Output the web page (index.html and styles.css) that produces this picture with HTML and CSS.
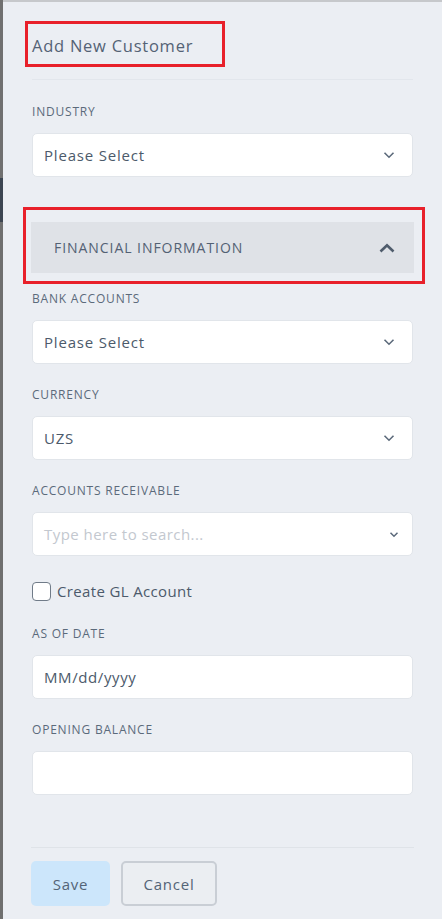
FILE: index.html
```html
<!DOCTYPE html>
<html lang="en">
  <head>
    <meta charset="UTF-8" />
    <meta name="viewport" content="width=device-width, initial-scale=1.0" />
    <title>Add New Customer</title>
    <link rel="stylesheet" href="styles.css">
  </head>
  <body>
    <div class="backdrop"></div>

    <aside class="drawer">
      <header class="drawer-head">
        <h2 class="title">Add New Customer<span class="mark mark-title"></span></h2>
      </header>

      <div class="field">
        <label class="label">Industry</label>
        <div class="select">
          <span>Please Select</span>
          <svg class="chev" width="12" height="8" viewBox="0 0 12 8"><path d="M1.5 1.8 6 6.2l4.5-4.4" fill="none" stroke="#5b697a" stroke-width="1.6"/></svg>
        </div>
      </div>

      <div class="section">
        <span class="section-title">Financial Information</span>
        <svg class="chev-up" width="16" height="10" viewBox="0 0 16 10"><path d="M1.5 8.5 8 2.2l6.5 6.3" fill="none" stroke="#4f5c6c" stroke-width="2.6"/></svg>
        <span class="mark mark-section"></span>
      </div>

      <div class="field first">
        <label class="label">Bank Accounts</label>
        <div class="select">
          <span>Please Select</span>
          <svg class="chev" width="12" height="8" viewBox="0 0 12 8"><path d="M1.5 1.8 6 6.2l4.5-4.4" fill="none" stroke="#5b697a" stroke-width="1.6"/></svg>
        </div>
      </div>

      <div class="field">
        <label class="label">Currency</label>
        <div class="select">
          <span>UZS</span>
          <svg class="chev" width="12" height="8" viewBox="0 0 12 8"><path d="M1.5 1.8 6 6.2l4.5-4.4" fill="none" stroke="#5b697a" stroke-width="1.6"/></svg>
        </div>
      </div>

      <div class="field">
        <label class="label">Accounts Receivable</label>
        <div class="select search">
          <span class="placeholder">Type here to search...</span>
          <svg class="chev small" width="10" height="7" viewBox="0 0 10 7"><path d="M1.5 1.8 5 5.2l3.5-3.4" fill="none" stroke="#5b697a" stroke-width="1.5"/></svg>
        </div>
      </div>

      <label class="check">
        <span class="box"></span>
        Create GL Account
      </label>

      <div class="field">
        <label class="label">As of Date</label>
        <div class="input">MM/dd/yyyy</div>
      </div>

      <div class="field">
        <label class="label">Opening Balance</label>
        <div class="input"></div>
      </div>

      <footer class="drawer-foot">
        <button class="btn btn-save">Save</button>
        <button class="btn btn-cancel">Cancel</button>
      </footer>
    </aside>
  </body>
</html>
```

FILE: styles.css
```css
* {
  margin: 0;
  padding: 0;
  box-sizing: border-box;
}

html,
body {
  height: 100%;
}

body {
  display: flex;
  font-family: "Open Sans", Arial, sans-serif;
  color: #4c5a6b;
  background-color: #ebeef3;
  overflow: hidden;
}

/* la franja oscura de la pagina que queda detras del panel */
.backdrop {
  width: 3px;
  flex: none;
  background: linear-gradient(
    to bottom,
    #707070 0,
    #707070 178px,
    #3c4551 178px,
    #3c4551 222px,
    #6f6f6f 222px
  );
}

.drawer {
  flex: 1;
  display: flex;
  flex-direction: column;
  border-top: 2px solid #c6c8cb;
  padding: 0 29px;
}

.drawer-head {
  padding: 32px 0 21px 0;
  border-bottom: 1px solid #e2e6ec;
}

.title {
  position: relative;
  font-size: 16.5px;
  font-weight: 400;
  color: #546275;
  line-height: 24px;
  letter-spacing: 0.75px;
}

.mark {
  position: absolute;
  border: 3px solid #e8202a;
  pointer-events: none;
}

.mark-title {
  left: -7px;
  top: -13px;
  width: 200px;
  height: 46px;
}

.field {
  margin-top: 24px;
}

.field.first {
  margin-top: 19px;
}

.drawer-head + .field {
  margin-top: 25px;
}

.label {
  display: block;
  font-size: 12px;
  line-height: 14px;
  text-transform: uppercase;
  color: #5b6a7b;
  letter-spacing: 0.8px;
  margin-bottom: 14px;
}

.select,
.input {
  display: flex;
  align-items: center;
  justify-content: space-between;
  height: 44px;
  padding: 0 17px 0 11px;
  background-color: #fff;
  border: 1px solid #e1e5ea;
  border-radius: 5px;
  font-size: 15px;
  color: #4c5a6b;
  letter-spacing: 0.8px;
}

.search {
  padding-right: 13px;
}

.placeholder {
  color: #c3c8cf;
  letter-spacing: 0.45px;
}

.input {
  letter-spacing: 0.6px;
}

.section {
  position: relative;
  display: flex;
  align-items: center;
  justify-content: space-between;
  height: 51px;
  margin: 45px -1px 0 -1px;
  padding: 0 19px 0 23px;
  background-color: #dfe2e7;
}

.section-title {
  font-size: 14px;
  text-transform: uppercase;
  color: #536174;
  letter-spacing: 0.95px;
}

.mark-section {
  left: -8px;
  top: -15px;
  right: -11px;
  bottom: -11px;
}

.check {
  display: flex;
  align-items: center;
  gap: 6px;
  margin-top: 25px;
  font-size: 15px;
  color: #4c5a6b;
  letter-spacing: 0.35px;
}

.check .box {
  width: 19px;
  height: 19px;
  background-color: #fff;
  border: 1px solid #707b88;
  border-radius: 4px;
}

.check + .field {
  margin-top: 26px;
}

.drawer-foot {
  margin: 52px -1px 0 -1px;
  padding-top: 13px;
  border-top: 1px solid #dfe3e8;
  display: flex;
  gap: 11px;
}

.btn {
  height: 45px;
  border-radius: 5px;
  font-family: inherit;
  font-size: 15px;
  color: #546477;
  letter-spacing: 0.8px;
}

.btn-save {
  width: 79px;
  border: none;
  background-color: #cce6fb;
}

.btn-cancel {
  width: 96px;
  background-color: #ebeef2;
  border: 2px solid #c9ced5;
}
```
